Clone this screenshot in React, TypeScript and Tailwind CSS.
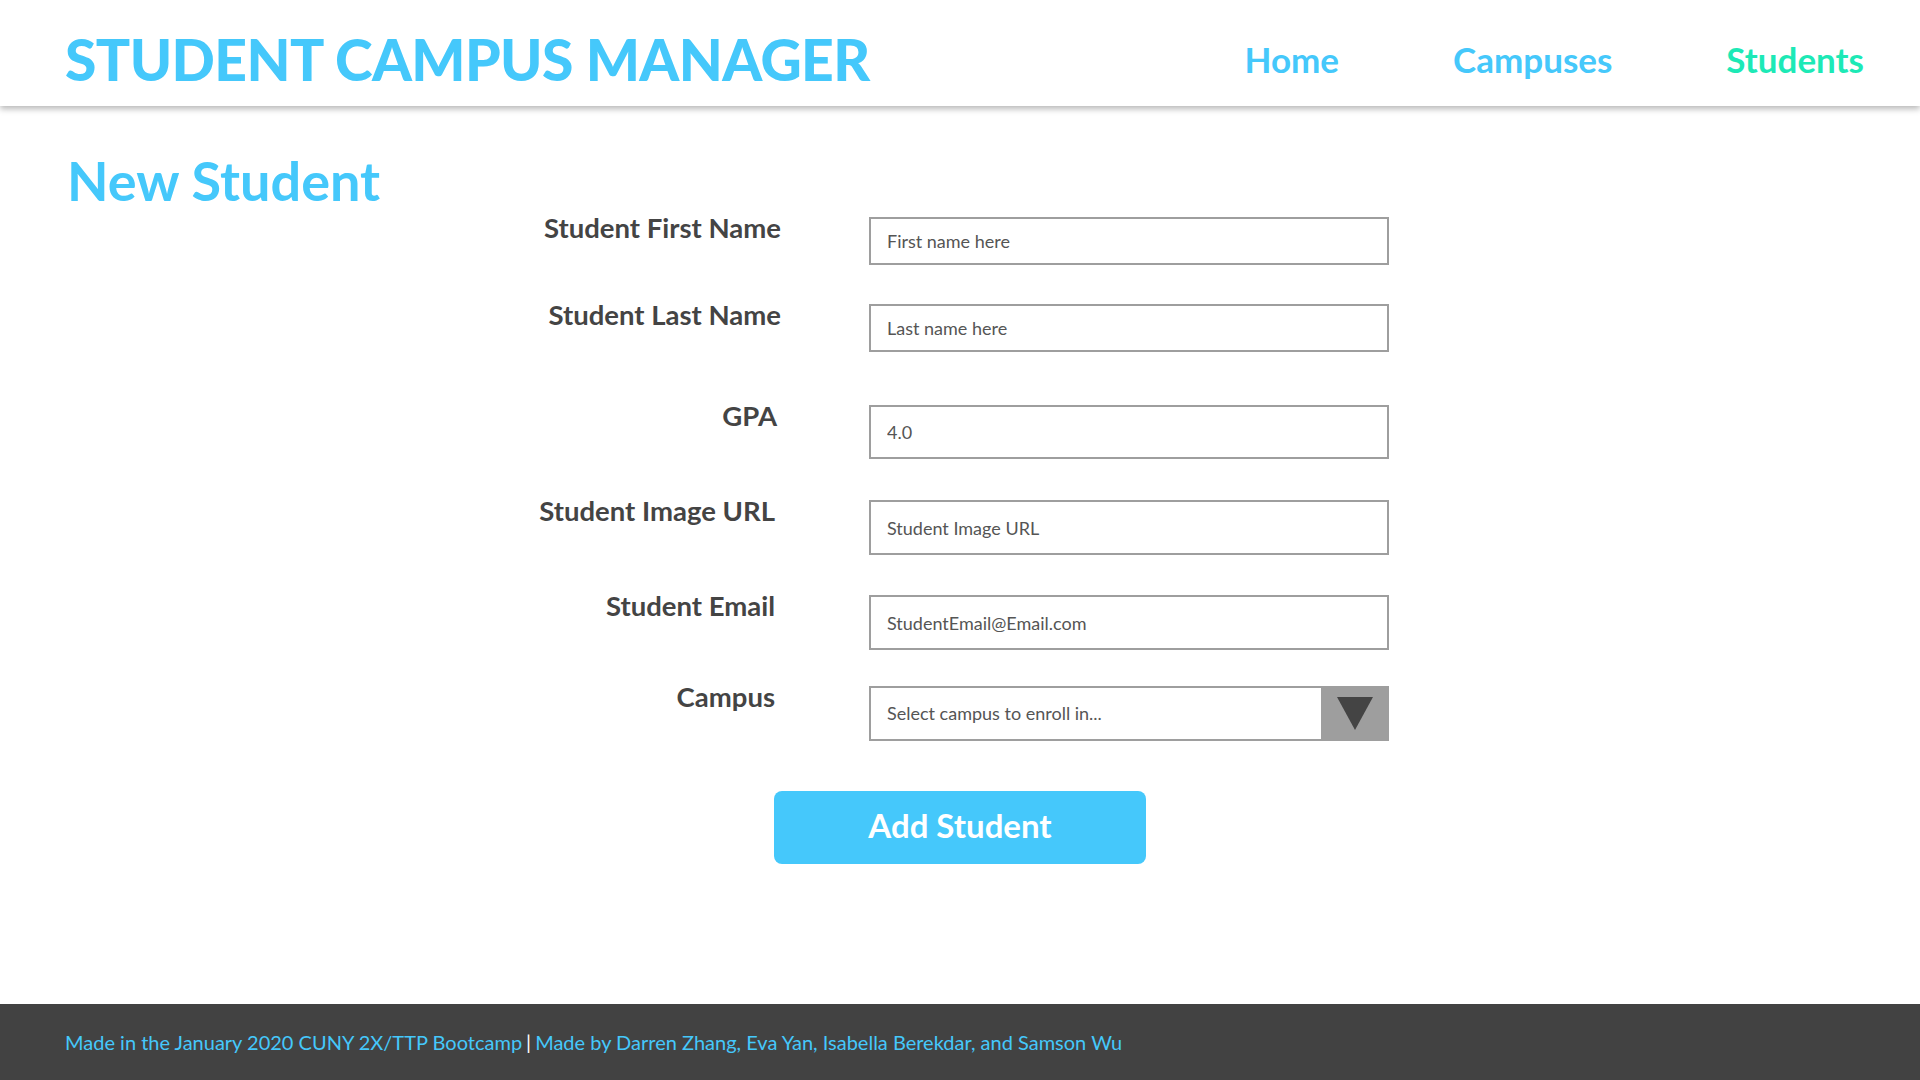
import React from 'react'

const FONT = "font-['Lato','Open_Sans',sans-serif]"

const FIELDS = [
  { label: 'Student First Name', placeholder: 'First name here', row: 'mt-0', box: 'h-[48px]', lab: 'pr-0' },
  { label: 'Student Last Name', placeholder: 'Last name here', row: 'mt-[39px]', box: 'h-[48px]', lab: 'pr-0' },
  { label: 'GPA', placeholder: '4.0', row: 'mt-[53px]', box: 'h-[54px]', lab: 'pr-[4px]' },
  { label: 'Student Image URL', placeholder: 'Student Image URL', row: 'mt-[41px]', box: 'h-[55px]', lab: 'pr-[6px]' },
  { label: 'Student Email', placeholder: 'StudentEmail@Email.com', row: 'mt-[40px]', box: 'h-[55px]', lab: 'pr-[6px]' },
]

function NavBar() {
  return (
    <header className="relative z-10 flex h-[106px] items-center justify-between bg-white pl-[65px] pr-[56px] pt-[12px] shadow-[0_3px_6px_rgba(0,0,0,0.28)]">
      <h1 className="text-[57px] font-black uppercase leading-none tracking-[-0.6px] text-[#45c8fb]">
        Student Campus Manager
      </h1>
      <nav className="flex items-center gap-[114px] text-[35px] font-bold">
        <a className="text-[#45c8fb]">Home</a>
        <a className="text-[#45c8fb]">Campuses</a>
        <a className="text-[#1de9b6]">Students</a>
      </nav>
    </header>
  )
}

function Field({ f }: { f: (typeof FIELDS)[number] }) {
  return (
    <div className={`flex items-start gap-[88px] ${f.row}`}>
      <label className={`-mt-[10px] w-[300px] text-right text-[27.5px] font-bold text-[#444] ${f.lab}`}>{f.label}</label>
      <input
        placeholder={f.placeholder}
        className={`w-[520px] border-2 border-[#9e9e9e] bg-white px-[16px] text-[18px] text-[#444] outline-none placeholder:text-[#555] ${f.box}`}
      />
    </div>
  )
}

export default function App() {
  return (
    <div className={`flex min-h-screen flex-col bg-white ${FONT}`}>
      <NavBar />
      <main className="flex-1">
        <div className="flex items-start px-[67px] pt-[43px]">
          <h2 className="w-[414px] shrink-0 text-[54px] font-bold leading-[1.2] text-[#45c8fb]">New Student</h2>
          <form className="mt-[68px] flex flex-col">
            {FIELDS.map((f) => (
              <Field key={f.label} f={f} />
            ))}
            <div className="mt-[36px] flex items-start gap-[88px]">
              <label className="-mt-[10px] w-[300px] pr-[6px] text-right text-[27.5px] font-bold text-[#444]">Campus</label>
              <div className="relative h-[55px] w-[520px]">
                <select
                  defaultValue=""
                  className="h-full w-full appearance-none border-2 border-[#9e9e9e] bg-white pl-[16px] text-[18px] text-[#555] outline-none"
                >
                  <option value="" disabled>
                    Select campus to enroll in...
                  </option>
                </select>
                <div className="pointer-events-none absolute right-0 top-0 flex h-full w-[68px] items-center justify-center bg-[#9e9e9e]">
                  <svg width="36" height="33" viewBox="0 0 36 33">
                    <polygon points="0,0 36,0 18,33" fill="#444" />
                  </svg>
                </div>
              </div>
            </div>
          </form>
        </div>
        <div className="mt-[50px] flex justify-center">
          <button className="h-[73px] w-[372px] rounded-[8px] bg-[#45c8fb] pb-[3px] text-[33px] font-bold text-white">
            Add Student
          </button>
        </div>
      </main>
      <footer className="flex h-[76px] items-center bg-[#424242] px-[65px] text-[20px] text-[#45c8fb]">
        <span>Made in the January 2020 CUNY 2X/TTP Bootcamp</span>
        <span className="mx-[4px] text-white">|</span>
        <span>Made by Darren Zhang, Eva Yan, Isabella Berekdar, and Samson Wu</span>
      </footer>
    </div>
  )
}
